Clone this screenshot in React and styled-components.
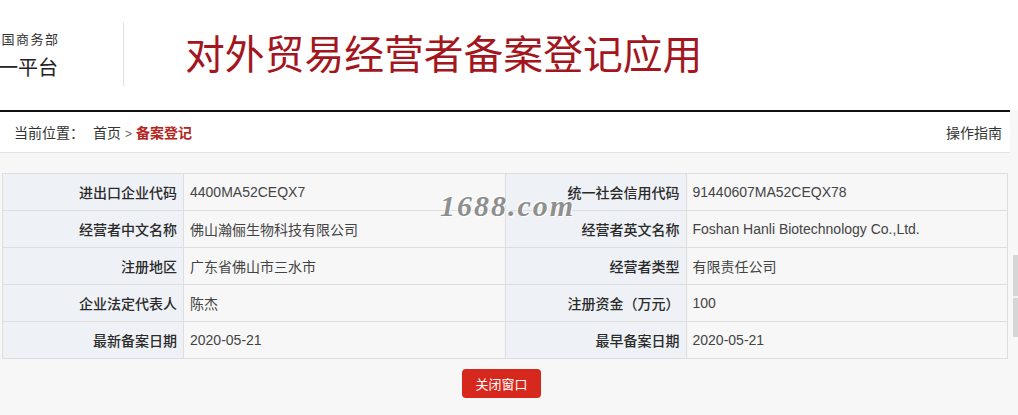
import styled, { createGlobalStyle } from 'styled-components'

const GlobalStyle = createGlobalStyle`
    html, body {
        margin: 0;
        padding: 0;
        background: #f7f7f7;
        font-family: "Liberation Sans", Arial, "Noto Sans CJK SC", sans-serif;
        color: #333;
        overflow: hidden;
    }
`

const rows = [
    ['进出口企业代码', '4400MA52CEQX7', '统一社会信用代码', '91440607MA52CEQX78'],
    ['经营者中文名称', '佛山瀚俪生物科技有限公司', '经营者英文名称', 'Foshan Hanli Biotechnology Co.,Ltd.'],
    ['注册地区', '广东省佛山市三水市', '经营者类型', '有限责任公司'],
    ['企业法定代表人', '陈杰', '注册资金（万元）', '100'],
    ['最新备案日期', '2020-05-21', '最早备案日期', '2020-05-21'],
]

const Page = styled.div`
    position: relative;
    width: 1018px;
    height: 415px;
    overflow: hidden;
`

const Header = styled.header`
    height: 110px;
    background: #fff;
    display: flex;
    align-items: center;
`

// logo text is clipped on the left, as in the original frame
const Logo = styled.div`
    width: 58px;
    overflow: hidden;
    display: flex;
    flex-direction: column;
    align-items: flex-end;
    gap: 4px;

    .small {
        font-size: 13px;
        letter-spacing: 1.5px;
        margin-right: -1.5px;
        white-space: nowrap;
        color: #333;
    }

    .big {
        font-size: 20px;
        white-space: nowrap;
        color: #222;
    }
`

const Divider = styled.div`
    width: 1px;
    height: 64px;
    background: #e2e2e2;
    margin-left: 65px;
    margin-top: -2px;
`

const Title = styled.h1`
    margin: -8px 0 0 61px;
    font-size: 39.8px;
    font-weight: normal;
    color: #a3161e;
    white-space: nowrap;
`

const Main = styled.div`
    width: 1010px;
    border-top: 2px solid #111;
`

const Crumbs = styled.div`
    height: 40px;
    background: #fff;
    border-bottom: 1px solid #e3e3e3;
    display: flex;
    align-items: center;
    justify-content: space-between;
    padding: 0 8px 0 14px;
    font-size: 14px;
    color: #333;

    .here {
        margin-right: 9px;
    }

    .sep {
        margin: 0 4px;
        font-size: 12px;
        color: #666;
    }

    b {
        color: #b3261e;
    }
`

const Table = styled.table`
    margin: 20px 0 0 2px;
    width: 1006px;
    border-collapse: collapse;
    table-layout: fixed;
    font-size: 14px;

    td {
        height: 36px;
        border: 1px solid #dedede;
        padding: 0 6px;
        white-space: nowrap;
        overflow: hidden;
    }
`

const Label = styled.td`
    width: 168px;
    text-align: right;
    background: #eef1f5;
    color: #2a2a2a;
    font-weight: 500;
`

const Value = styled.td`
    background: #f7f7f7;
    color: #444;
`

const Actions = styled.div`
    display: flex;
    justify-content: center;
    padding-top: 10px;
    margin-left: -7px;
`

const Button = styled.button`
    height: 29px;
    padding: 0 13px;
    border: none;
    border-radius: 4px;
    background: #d7281d;
    color: #fff;
    font-family: inherit;
    font-size: 13px;
    cursor: pointer;
`

const Watermark = styled.div`
    position: absolute;
    left: 440px;
    top: 189px;
    font-family: "Liberation Serif", serif;
    font-style: italic;
    font-weight: bold;
    font-size: 30px;
    letter-spacing: 2px;
    color: #8f8f8f;
    text-shadow: 1px 1px 0 #fff, -1px -1px 0 #fff;
    pointer-events: none;
`

const ScrollThumb = styled.div`
    position: absolute;
    right: 0;
    top: 255px;
    width: 5px;
    height: 82px;
    background: linear-gradient(#d6d6d6 0 50%, #f0f0f0 50% 52%, #d6d6d6 52%);
`

export default function App() {
    return (
        <Page>
            <GlobalStyle />
            <Header>
                <Logo>
                    <span className='small'>中华人民共和国商务部</span>
                    <span className='big'>对外贸易经营者备案登记统一平台</span>
                </Logo>
                <Divider />
                <Title>对外贸易经营者备案登记应用</Title>
            </Header>
            <Main>
                <Crumbs>
                    <div>
                        <span className='here'>当前位置：</span>
                        <span>首页</span>
                        <span className='sep'>&gt;</span>
                        <b>备案登记</b>
                    </div>
                    <span>操作指南</span>
                </Crumbs>
                <Table>
                    <tbody>
                        {rows.map(r => (
                            <tr key={r[0]}>
                                <Label>{r[0]}</Label>
                                <Value>{r[1]}</Value>
                                <Label>{r[2]}</Label>
                                <Value>{r[3]}</Value>
                            </tr>
                        ))}
                    </tbody>
                </Table>
                <Actions>
                    <Button>关闭窗口</Button>
                </Actions>
            </Main>
            <Watermark>1688.com</Watermark>
            <ScrollThumb />
        </Page>
    )
}
